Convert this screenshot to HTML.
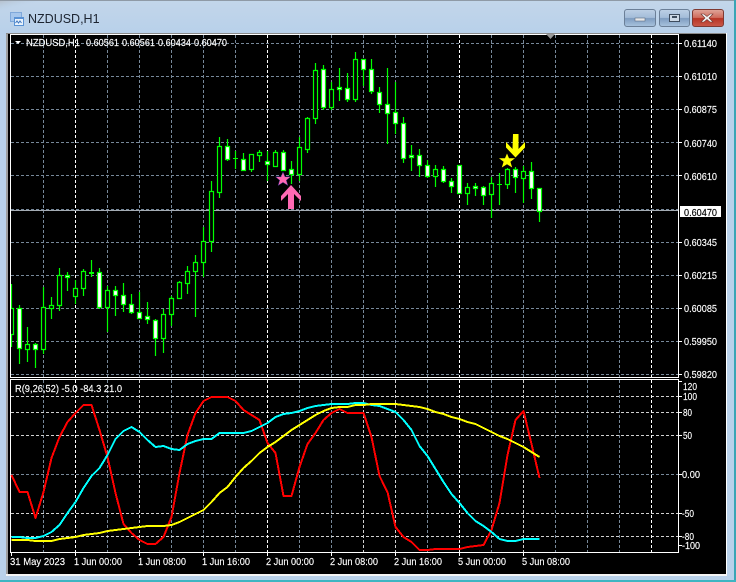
<!DOCTYPE html>
<html><head><meta charset="utf-8">
<style>
html,body{margin:0;padding:0;background:#b9d1ea;width:736px;height:582px;overflow:hidden}
svg{display:block;position:absolute;left:0;top:0}
text{font-family:"Liberation Sans",sans-serif;font-size:10.500px;fill:#fff;stroke:#fff;stroke-width:.15px}
.c{shape-rendering:crispEdges}
</style></head><body>
<svg width="736" height="582" viewBox="0 0 736 582" xmlns="http://www.w3.org/2000/svg">
<defs>
<linearGradient id="tb" x1="0" y1="0" x2="0" y2="1"><stop offset="0" stop-color="#c3d6ea"/><stop offset="1" stop-color="#b9d1ea"/></linearGradient>
<linearGradient id="tl" x1="0" y1="0" x2="1" y2="1"><stop offset="0" stop-color="#b5bec8"/><stop offset=".2" stop-color="#b9d1ea" stop-opacity="0"/></linearGradient>
<linearGradient id="bb" x1="0" y1="0" x2="0" y2="1"><stop offset="0" stop-color="#bdd0e6"/><stop offset=".48" stop-color="#a3bcd8"/><stop offset=".52" stop-color="#7e9cc0"/><stop offset="1" stop-color="#a9c3de"/></linearGradient>
<linearGradient id="br" x1="0" y1="0" x2="0" y2="1"><stop offset="0" stop-color="#e0a79c"/><stop offset=".48" stop-color="#cf6b5c"/><stop offset=".52" stop-color="#b83425"/><stop offset="1" stop-color="#c9594a"/></linearGradient>
<clipPath id="mc"><rect x="11" y="35" width="667" height="342"/></clipPath>
</defs>
<rect width="736" height="582" fill="#b9d1ea"/>
<rect width="736" height="30" fill="url(#tb)"/>
<rect width="120" height="30" fill="url(#tl)"/>
<rect x="0" y="0" width="736" height="1" fill="#8f9aa6"/>
<rect x="734" y="0" width="2" height="582" fill="#3aa5b5"/>
<rect x="0" y="580" width="736" height="2" fill="#3db5c2"/>
<!-- title icon -->
<rect x="10.500" y="12.500" width="11" height="9" fill="#a5c6ec" stroke="#7fa8da"/>
<rect x="14.500" y="17.500" width="9" height="8" fill="#e8f2fc" stroke="#5a92d4"/>
<rect x="14" y="17" width="10" height="2" fill="#5a92d4"/>
<path d="M15.500 23l1.500-2 1.500 2 1.500-2 1.500 2" fill="none" stroke="#3f78c0"/>
<text x="28" y="23" style="font-size:12.500px;fill:#1c2430;stroke:none">NZDUSD,H1</text>
<!-- buttons -->
<rect x="624.500" y="9.500" width="31" height="17" rx="2.500" fill="url(#bb)" stroke="#6b7f97"/>
<rect x="635" y="18" width="10" height="3" fill="#e8e8e8" stroke="#5c6d82" stroke-width=".6"/>
<rect x="659.500" y="9.500" width="30" height="17" rx="2.500" fill="url(#bb)" stroke="#6b7f97"/>
<rect x="669.500" y="14.500" width="10" height="7" fill="#cdd9e6" stroke="#3e4c5e" stroke-width="1"/>
<rect x="672" y="16" width="5" height="2" fill="#3e4c5e"/>
<rect x="692.500" y="9.500" width="31" height="17" rx="2.500" fill="url(#br)" stroke="#7f3a33"/>
<path d="M704 14l3 2.500 3-2.500h3l-4 4 4 4h-3l-3-2.500-3 2.500h-3l4-4-4-4z" fill="#f2f2f2" stroke="#6b3630" stroke-width=".6"/>
<!-- client -->
<rect x="6" y="33" width="721" height="542" fill="#6e6e6e"/>
<rect x="6" y="33" width="720" height="1" fill="#8a8a8a"/>
<rect x="726" y="33" width="1" height="542" fill="#fff"/>
<rect x="6" y="574" width="721" height="2" fill="#f4f4f4"/>
<rect x="6" y="34" width="2" height="540" fill="#9e9e9e"/>
<rect x="8" y="34" width="718" height="540" fill="#000"/>
<!-- grid main -->
<g class="c" stroke="#778899" stroke-dasharray="3 2" fill="none">
<path d="M11 43.500H678M11 76.500H678M11 109.500H678M11 142.500H678M11 175.500H678M11 209.500H678M11 242.500H678M11 275.500H678M11 308.500H678M11 341.500H678M11 374.500H678"/>
<path d="M43.500 35V377M107.500 35V377M139.500 35V377M171.500 35V377M203.500 35V377M235.500 35V377M299.500 35V377M331.500 35V377M363.500 35V377M395.500 35V377M427.500 35V377M491.500 35V377M523.500 35V377M555.500 35V377M587.500 35V377M619.500 35V377"/>
</g>
<path class="c" d="M75.500 35V377M267.500 35V377M459.500 35V377M651.500 35V377" stroke="#fff" stroke-dasharray="3 2"/>
<!-- grid sub -->
<g class="c" stroke="#778899" stroke-dasharray="3 2" fill="none">
<path d="M11 474.500H678"/>
<path d="M43.500 380V552M107.500 380V552M171.500 380V552M203.500 380V552M235.500 380V552M299.500 380V552M331.500 380V552M427.500 380V552M491.500 380V552M555.500 380V552M587.500 380V552M619.500 380V552"/>
</g>
<g class="c" stroke="#d0d0d0" stroke-dasharray="3 2" fill="none">
<path d="M11 396.500H678M11 412.500H678M11 435.500H678M11 513.500H678M11 536.500H678"/>
<path d="M139.500 380V552M363.500 380V552M395.500 380V552M523.500 380V552"/>
</g>
<path class="c" d="M75.500 380V552M267.500 380V552M459.500 380V552M651.500 380V552" stroke="#fff" stroke-dasharray="3 2"/>
<!-- bid line -->
<rect x="11" y="210" width="667" height="1" fill="#a4abb3"/>
<!-- candles -->
<g clip-path="url(#mc)" stroke-width="1.200">
<path fill="none" stroke="#00ff00" d="M11.500 284V347M19.500 305V364M27.500 327V362M35.500 343V368M43.500 287V354M51.500 297V319M59.500 268V311M67.500 272V291M75.500 280V304M83.500 269V296M91.500 260V277M99.500 268V309M107.500 286V332M115.500 286V316M123.500 283V312M131.500 294V314M139.500 292V319M147.500 302V324M155.500 319V356M163.500 309V353M171.500 296V326M179.500 281V299M187.500 266V294M195.500 255V317M203.500 227V277M211.500 181V252M219.500 137V198M227.500 139V161M235.500 151V169M243.500 153V171M251.500 154V172M259.500 150V162M267.500 151V181M275.500 150V167M283.500 150V171M291.500 161V184M299.500 137V181M307.500 117V153M315.500 63V124M323.500 65V110M331.500 82V110M339.500 68V101M347.500 73V102M355.500 52V102M363.500 59V86M371.500 59V94M379.500 87V113M387.500 68V144M395.500 82V134M403.500 117V163M411.500 145V171M419.500 149V177M427.500 160V178M435.500 165V187M443.500 166V183M451.500 178V193M459.500 165V194M467.500 183V205M475.500 183V196M483.500 186V205M491.500 177V218M499.500 173V205M507.500 168V189M515.500 167V193M523.500 166V203M531.500 162V199M539.500 188V222"/>
<path fill="#000" stroke="#00ff00" d="M9.500 308.500h4v26h-4zM25.500 344.500h4v5h-4zM41.500 307.500h4v42h-4zM49.500 305.500h4v3h-4zM57.500 275.500h4v30h-4zM73.500 288.500h4v8h-4zM81.500 271.500h4v17h-4zM105.500 290.500h4v17h-4zM161.500 314.500h4v24h-4zM169.500 298.500h4v16h-4zM177.500 282.500h4v16h-4zM185.500 271.500h4v12h-4zM193.500 262.500h4v9h-4zM201.500 241.500h4v21h-4zM209.500 191.500h4v50h-4zM217.500 146.500h4v46h-4zM249.500 154.500h4v15h-4zM257.500 152.500h4v3h-4zM273.500 152.500h4v14h-4zM297.500 147.500h4v27h-4zM305.500 118.500h4v31h-4zM313.500 70.500h4v48h-4zM329.500 89.500h4v18h-4zM353.500 59.500h4v40h-4zM433.500 169.500h4v7h-4zM465.500 187.500h4v6h-4zM489.500 183.500h4v11h-4zM505.500 169.500h4v15h-4zM521.500 171.500h4v7h-4z"/>
<path fill="#fff" stroke="#00ff00" d="M17.500 308.500h4v40h-4zM33.500 344.500h4v5h-4zM65.500 275.500h4v2h-4zM97.500 272.500h4v35h-4zM113.500 290.500h4v5h-4zM121.500 295.500h4v9h-4zM129.500 304.500h4v8h-4zM137.500 312.500h4v6h-4zM145.500 316.500h4v3h-4zM153.500 320.500h4v18h-4zM225.500 146.500h4v13h-4zM241.500 159.500h4v11h-4zM265.500 161.500h4v3h-4zM281.500 152.500h4v18h-4zM289.500 169.500h4v5h-4zM321.500 69.500h4v38h-4zM337.500 87.500h4v2h-4zM345.500 88.500h4v11h-4zM361.500 59.500h4v10h-4zM369.500 69.500h4v22h-4zM377.500 92.500h4v12h-4zM385.500 104.500h4v9h-4zM393.500 112.500h4v11h-4zM401.500 123.500h4v35h-4zM409.500 155.500h4v2h-4zM417.500 155.500h4v10h-4zM425.500 165.500h4v11h-4zM441.500 169.500h4v12h-4zM449.500 181.500h4v5h-4zM457.500 165.500h4v28h-4zM473.500 186.500h4v2h-4zM481.500 187.500h4v8h-4zM513.500 169.500h4v8h-4zM529.500 171.500h4v17h-4zM537.500 188.500h4v23h-4z"/>
<path fill="#00ff00" d="M89 272h5v2h-5zM233 158h5v1h-5zM497 184h5v1h-5z"/>
</g>
<!-- markers -->
<path d="M283 172l2 4.800h5.500l-4.200 3.500 1.600 5.200-4.900-3.100-4.900 3.100 1.600-5.200-4.200-3.500h5.500z" fill="#ff69b4" stroke="#3a2a8a" stroke-width=".5"/>
<path d="M291 185l10 11v5l-7-7v15h-6v-15l-7 7v-5z" fill="#ff69b4"/>
<path d="M513 134h5.500v15l6.500-7v5.500l-9.500 10-9.500-10v-5.500l6.500 7z" fill="#ffff00"/>
<path d="M507 153.500l2 4.800h6l-4.600 3.500 1.800 5.700-5.200-3.300-5.200 3.300 1.800-5.700-4.600-3.500h6z" fill="#ffff00"/>
<!-- frames -->
<g class="c" fill="none" stroke="#fff">
<rect x="10.500" y="34.500" width="668" height="343"/>
<rect x="10.500" y="379.500" width="668" height="173"/>
</g>
<path d="M546 34h9l-4.500 5z" fill="#9a9a9a"/>
<path d="M15 41h6l-3 3z" fill="#fff"/>
<!-- sub lines -->
<g class="c" fill="none" stroke-width="2" stroke-linejoin="round">
<polyline stroke="#ff0000" points="11.500,475 19.500,492 27.500,492 35.500,518 43.500,492 51.500,458 59.500,437 67.500,422 75.500,413 83.500,405 91.500,405 99.500,430 107.500,457 115.500,493 123.500,524 131.500,533 139.500,540 147.500,544 155.500,544 163.500,537 171.500,517 179.500,473 187.500,435 195.500,413 203.500,401 211.500,397 219.500,397 227.500,397 235.500,401 243.500,410 251.500,415 259.500,420 267.500,443 275.500,453 283.500,496 291.500,496 299.500,467 307.500,444 315.500,433 323.500,420 331.500,413 339.500,409 347.500,413 355.500,413 363.500,413 371.500,437 379.500,476 387.500,492 395.500,527 403.500,537 411.500,542 419.500,550 427.500,550 435.500,549 443.500,549 451.500,549 459.500,549 467.500,547 475.500,546 483.500,545 491.500,530 499.500,503 507.500,455 515.500,420 523.500,411 531.500,444 539.500,478"/>
<polyline stroke="#00ffff" points="11.500,537 19.500,537 27.500,538 35.500,538 43.500,536 51.500,532 59.500,525 67.500,513 75.500,502 83.500,488 91.500,476 99.500,468 107.500,455 115.500,439 123.500,431 131.500,427 139.500,432 147.500,440 155.500,447 163.500,446 171.500,449 179.500,450 187.500,444 195.500,441 203.500,439 211.500,439 219.500,433 227.500,433 235.500,433 243.500,433 251.500,431 259.500,427 267.500,423 275.500,417 283.500,414 291.500,413 299.500,411 307.500,408 315.500,406 323.500,405 331.500,404 339.500,404 347.500,404 355.500,403 363.500,403 371.500,405 379.500,406 387.500,409 395.500,412 403.500,420 411.500,430 419.500,446 427.500,456 435.500,469 443.500,482 451.500,494 459.500,503 467.500,513 475.500,521 483.500,526 491.500,532 499.500,539 507.500,541 515.500,541 523.500,539 531.500,539 539.500,539"/>
<polyline stroke="#ffff00" points="11.500,540 19.500,540 27.500,540 35.500,541 43.500,541 51.500,541 59.500,539 67.500,538 75.500,537 83.500,535 91.500,534 99.500,533 107.500,531 115.500,530 123.500,529 131.500,528 139.500,527 147.500,526 155.500,526 163.500,526 171.500,525 179.500,522 187.500,518 195.500,514 203.500,510 211.500,502 219.500,493 227.500,487 235.500,477 243.500,468 251.500,461 259.500,453 267.500,447 275.500,442 283.500,436 291.500,430 299.500,425 307.500,420 315.500,415 323.500,411 331.500,408 339.500,407 347.500,407 355.500,405 363.500,405 371.500,404 379.500,404 387.500,404 395.500,404 403.500,405 411.500,406 419.500,407 427.500,409 435.500,412 443.500,414 451.500,417 459.500,419 467.500,422 475.500,424 483.500,428 491.500,432 499.500,436 507.500,439 515.500,443 523.500,447 531.500,452 539.500,457"/>
</g>
<!-- ticks -->
<path class="c" stroke="#fff" fill="none" d="M679 43.500h3M679 76.500h3M679 109.500h3M679 142.500h3M679 175.500h3M679 242.500h3M679 275.500h3M679 308.500h3M679 341.500h3M679 374.500h3M679 396.500h3M679 412.500h3M679 435.500h3M679 474.500h3M679 513.500h3M679 536.500h3M679 381.500h3M679 545.500h3M11.500 553v3M75.500 553v3M139.500 553v3M203.500 553v3M267.500 553v3M331.500 553v3M395.500 553v3M459.500 553v3M523.500 553v3"/>
<!-- text -->
<text x="26" y="46" textLength="54" lengthAdjust="spacingAndGlyphs">NZDUSD,H1</text>
<text x="86" y="46" textLength="33" lengthAdjust="spacingAndGlyphs">0.60561</text>
<text x="122" y="46" textLength="33" lengthAdjust="spacingAndGlyphs">0.60561</text>
<text x="158" y="46" textLength="33" lengthAdjust="spacingAndGlyphs">0.60434</text>
<text x="194" y="46" textLength="33" lengthAdjust="spacingAndGlyphs">0.60470</text>
<g>
<text x="684" y="47" textLength="33" lengthAdjust="spacingAndGlyphs">0.61140</text>
<text x="684" y="80" textLength="33" lengthAdjust="spacingAndGlyphs">0.61010</text>
<text x="684" y="113" textLength="33" lengthAdjust="spacingAndGlyphs">0.60875</text>
<text x="684" y="147" textLength="33" lengthAdjust="spacingAndGlyphs">0.60740</text>
<text x="684" y="180" textLength="33" lengthAdjust="spacingAndGlyphs">0.60610</text>
<text x="684" y="246" textLength="33" lengthAdjust="spacingAndGlyphs">0.60345</text>
<text x="684" y="279" textLength="33" lengthAdjust="spacingAndGlyphs">0.60215</text>
<text x="684" y="312" textLength="33" lengthAdjust="spacingAndGlyphs">0.60085</text>
<text x="684" y="345" textLength="33" lengthAdjust="spacingAndGlyphs">0.59950</text>
<text x="684" y="378" textLength="33" lengthAdjust="spacingAndGlyphs">0.59820</text>
</g>
<rect x="680" y="206" width="41" height="11" fill="#fff"/>
<text x="684" y="216" textLength="33" lengthAdjust="spacingAndGlyphs" style="fill:#000;stroke:#000">0.60470</text>
<text x="15" y="392" textLength="107" lengthAdjust="spacingAndGlyphs">R(9,26,52) -5.0 -84.3 21.0</text>
<text x="683" y="390" textLength="14" lengthAdjust="spacingAndGlyphs">120</text>
<text x="683" y="400" textLength="14" lengthAdjust="spacingAndGlyphs">100</text>
<text x="683" y="416" textLength="9" lengthAdjust="spacingAndGlyphs">80</text>
<text x="683" y="439" textLength="9" lengthAdjust="spacingAndGlyphs">50</text>
<text x="682" y="478" textLength="18" lengthAdjust="spacingAndGlyphs">0.00</text>
<text x="682" y="517" textLength="12" lengthAdjust="spacingAndGlyphs">-50</text>
<text x="682" y="540" textLength="12" lengthAdjust="spacingAndGlyphs">-80</text>
<text x="682" y="549" textLength="18" lengthAdjust="spacingAndGlyphs">-100</text>
<text x="10" y="565" textLength="55" lengthAdjust="spacingAndGlyphs">31 May 2023</text>
<text x="74" y="565" textLength="48" lengthAdjust="spacingAndGlyphs">1 Jun 00:00</text>
<text x="138" y="565" textLength="48" lengthAdjust="spacingAndGlyphs">1 Jun 08:00</text>
<text x="202" y="565" textLength="48" lengthAdjust="spacingAndGlyphs">1 Jun 16:00</text>
<text x="266" y="565" textLength="48" lengthAdjust="spacingAndGlyphs">2 Jun 00:00</text>
<text x="330" y="565" textLength="48" lengthAdjust="spacingAndGlyphs">2 Jun 08:00</text>
<text x="394" y="565" textLength="48" lengthAdjust="spacingAndGlyphs">2 Jun 16:00</text>
<text x="458" y="565" textLength="48" lengthAdjust="spacingAndGlyphs">5 Jun 00:00</text>
<text x="522" y="565" textLength="48" lengthAdjust="spacingAndGlyphs">5 Jun 08:00</text>
</svg>
</body></html>
